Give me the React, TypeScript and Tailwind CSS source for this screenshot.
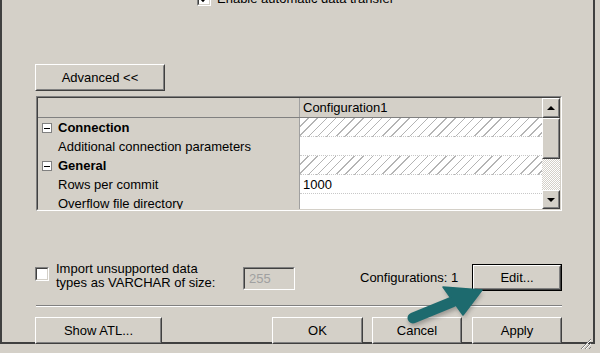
import React from 'react';

const Raised: React.FC<{ className?: string; children?: React.ReactNode }> = ({ className = '', children }) => (
  <div className={`border border-t-white border-l-white border-r-[#404040] border-b-[#404040] ${className}`}>
    <div className="flex h-full w-full items-center justify-center border border-t-[#d4d0c8] border-l-[#d4d0c8] border-r-[#808080] border-b-[#808080]">
      {children}
    </div>
  </div>
);

const Sunken: React.FC<{ className?: string; innerClassName?: string; children?: React.ReactNode }> = ({
  className = '',
  innerClassName = '',
  children,
}) => (
  <div className={`border border-t-[#808080] border-l-[#808080] border-r-white border-b-white ${className}`}>
    <div className={`h-full w-full border border-t-[#404040] border-l-[#404040] border-r-[#d4d0c8] border-b-[#d4d0c8] ${innerClassName}`}>
      {children}
    </div>
  </div>
);

const ExpandBox = () => (
  <div className="flex h-[10px] w-[10px] items-center justify-center border border-[#808080] bg-white">
    <div className="h-px w-[6px] bg-black" />
  </div>
);

const hatch =
  'bg-[repeating-linear-gradient(135deg,#ffffff_0_5.5px,#b4b4b4_5.5px_6.5px)]';

interface Row {
  label: string;
  category?: boolean;
  value?: string;
}

const rows: Row[] = [
  { label: 'Connection', category: true },
  { label: 'Additional connection parameters' },
  { label: 'General', category: true },
  { label: 'Rows per commit', value: '1000' },
  { label: 'Overflow file directory' },
];

const App: React.FC = () => {
  return (
    <div className="relative h-[353px] w-[600px] overflow-hidden bg-[#d4d0c8] font-['Liberation_Sans',Arial,sans-serif] text-[13px] text-black">
      <div className="h-[353px] w-[595px] border-b-2 border-l-2 border-r-2 border-[#404040] pl-[33px]">
        {/* top option, mostly scrolled out of view */}
        <div className="-mt-[9px] flex h-[15px] items-center pl-[162px]">
          <Sunken className="h-[14px] w-[14px]" innerClassName="bg-white flex items-center justify-center">
            <svg width="8" height="8" viewBox="0 0 8 8">
              <path d="M1 4 L3 6 L7 1.5" stroke="black" strokeWidth="1.6" fill="none" />
            </svg>
          </Sunken>
          <span className="ml-[6px] leading-[15px]">Enable automatic data transfer</span>
        </div>

        <Raised className="mt-[58px] h-[27px] w-[130px]">
          <span>Advanced &lt;&lt;</span>
        </Raised>

        {/* property grid */}
        <Sunken className="ml-px mt-[5px] h-[115px] w-[526px] overflow-hidden" innerClassName="flex overflow-hidden">
          <div className="flex w-[504px] flex-col">
            <div className="flex h-[20px] shrink-0 border-b border-[#808080]">
              <div className="w-[262px] border-r border-[#a0a0a0]" />
              <div className="flex w-[242px] items-center pl-[3px]">Configuration1</div>
            </div>
            {rows.map((row) => (
              <div key={row.label} className="flex h-[19px] shrink-0">
                <div className="flex w-[262px] items-center border-r border-[#a0a0a0] pl-[4px] pt-px">
                  {row.category ? <ExpandBox /> : <div className="w-[10px]" />}
                  <span className={`ml-[6px] whitespace-nowrap ${row.category ? 'font-bold' : ''}`}>{row.label}</span>
                </div>
                <div
                  className={`flex w-[242px] items-center border-b border-dotted border-[#c8c8c8] pl-[3px] pt-px ${
                    row.category ? hatch : 'bg-white'
                  }`}
                >
                  {row.value}
                </div>
              </div>
            ))}
          </div>

          {/* vertical scrollbar */}
          <div className="flex w-[18px] flex-col">
            <Raised className="h-[20px] w-[18px] shrink-0">
              <div className="h-0 w-0 border-b-[4px] border-l-[4px] border-r-[4px] border-b-black border-l-transparent border-r-transparent" />
            </Raised>
            <Raised className="h-[41px] w-[18px] shrink-0" />
            <div className="h-[31px] shrink-0 bg-[repeating-conic-gradient(#ffffff_0_25%,#d4d0c8_0_50%)] bg-[length:2px_2px]" />
            <Raised className="h-[19px] w-[18px] shrink-0">
              <div className="h-0 w-0 border-l-[4px] border-r-[4px] border-t-[4px] border-t-black border-l-transparent border-r-transparent" />
            </Raised>
          </div>
        </Sunken>

        {/* unsupported types row */}
        <div className="mt-[51px] flex h-[29px] w-[527px] items-start">
          <Sunken className="mt-[5px] h-[14px] w-[14px] shrink-0" innerClassName="bg-white" />
          <div className="ml-[7px] w-[187px] leading-[14px]">
            <div>Import unsupported data</div>
            <div>types as VARCHAR of size:</div>
          </div>
          <Sunken className="mt-[5px] h-[23px] w-[52px] shrink-0" innerClassName="flex items-center pl-[4px] text-[#a0a0a0]">
            255
          </Sunken>
          <span className="ml-[65px] mt-[9px] leading-[14px] whitespace-nowrap">Configurations: 1</span>
          <div className="ml-auto mt-[2px] h-[27px] w-[90px] border border-black">
            <Raised className="h-full w-full">
              <span>Edit...</span>
            </Raised>
          </div>
        </div>

        <div className="mt-[14px] h-[2px] w-[526px] border-b border-t border-b-white border-t-[#808080] ml-px" />

        <div className="mt-[10px] flex w-[527px]">
          <Raised className="h-[27px] w-[127px]">
            <span>Show ATL...</span>
          </Raised>
          <Raised className="ml-[110px] h-[27px] w-[91px]">
            <span>OK</span>
          </Raised>
          <Raised className="ml-[9px] h-[27px] w-[90px]">
            <span>Cancel</span>
          </Raised>
          <Raised className="ml-[10px] h-[27px] w-[90px]">
            <span>Apply</span>
          </Raised>
        </div>
      </div>

      {/* resize grip */}
      <svg className="absolute left-[579px] top-[337px]" width="13" height="13" viewBox="0 0 13 13">
        <path d="M12 2 L2 12 M12 6 L6 12 M12 10 L10 12" stroke="#808080" strokeWidth="1" />
        <path d="M12 3 L3 12 M12 7 L7 12" stroke="#ffffff" strokeWidth="1" />
      </svg>

      {/* callout arrow */}
      <svg className="pointer-events-none absolute left-0 top-0" width="600" height="353" viewBox="0 0 600 353">
        <defs>
          <filter id="arrowShadow" x="-20%" y="-20%" width="140%" height="140%">
            <feGaussianBlur stdDeviation="2" />
          </filter>
        </defs>
        <g opacity="0.35" filter="url(#arrowShadow)" transform="translate(1 3)">
          <path d="M413 318 L457 300" stroke="#333" strokeWidth="11" strokeLinecap="round" />
          <polygon points="482,290 443,287 463,315" fill="#333" />
        </g>
        <path d="M413 318 L457 300" stroke="#1d6a6e" strokeWidth="11" strokeLinecap="round" />
        <polygon points="482,290 443,287 463,315" fill="#1d6a6e" strokeLinejoin="round" stroke="#1d6a6e" strokeWidth="1.5" />
      </svg>
    </div>
  );
};

export default App;
